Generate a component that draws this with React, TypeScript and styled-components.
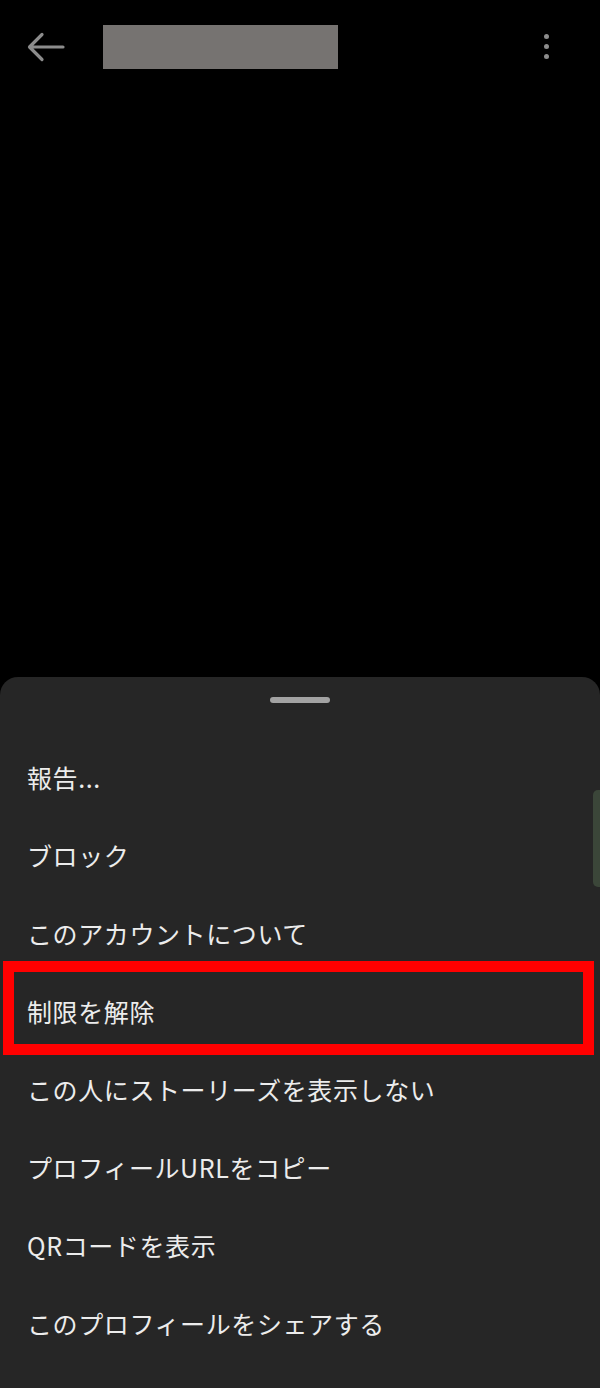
import React from "react";
import styled, { createGlobalStyle } from "styled-components";

const Global = createGlobalStyle`
  html, body { margin: 0; padding: 0; background: #000; }
  body { font-family: "Noto Sans CJK JP", "Noto Sans", sans-serif; }
  * { box-sizing: border-box; }
`;

const Screen = styled.div`
  width: 600px;
  height: 1388px;
  display: flex;
  flex-direction: column;
  background: #000;
  overflow: hidden;
  position: relative;
`;

const TopBar = styled.div`
  height: 96px;
  display: flex;
  align-items: flex-start;
  padding: 25px 0 0 0;
`;

const BackButton = styled.div`
  width: 103px;
  height: 44px;
  display: flex;
  align-items: center;
  padding-left: 27px;
  color: #8c8c8c;
`;

const TitleBlock = styled.div`
  width: 235px;
  height: 44px;
  background: #767371;
`;

const MenuButton = styled.div`
  margin-left: auto;
  margin-right: 51px;
  height: 44px;
  display: flex;
  flex-direction: column;
  justify-content: center;
  gap: 5px;
  padding-bottom: 2px;
`;

const Dot = styled.span`
  width: 5px;
  height: 5px;
  border-radius: 50%;
  background: #8c8c8c;
`;

const Sheet = styled.div`
  margin-top: auto;
  height: 711px;
  background: #262626;
  border-radius: 18px 18px 0 0;
  display: flex;
  flex-direction: column;
  position: relative;
`;

const HandleRow = styled.div`
  display: flex;
  justify-content: center;
  padding-top: 20px;
  height: 61px;
`;

const Handle = styled.div`
  width: 60px;
  height: 6px;
  border-radius: 3px;
  background: #a3a3a3;
`;

const Item = styled.div`
  position: relative;
  height: 78px;
  display: flex;
  align-items: center;
  padding-left: 27px;
  font-size: 25px;
  color: #ececec;
  letter-spacing: 0.6px;
`;

const Highlight = styled.div`
  position: absolute;
  left: 3px;
  right: 6px;
  top: -11px;
  bottom: -5px;
  border: 11px solid #ff0000;
  pointer-events: none;
`;

const ScrollThumb = styled.div`
  position: absolute;
  right: 0;
  top: 113px;
  width: 7px;
  height: 97px;
  border-radius: 5px 0 0 5px;
  background: #3b4639;
`;

const items = [
  "報告...",
  "ブロック",
  "このアカウントについて",
  "制限を解除",
  "この人にストーリーズを表示しない",
  "プロフィールURLをコピー",
  "QRコードを表示",
  "このプロフィールをシェアする",
];

export default function App() {
  return (
    <Screen>
      <Global />
      <TopBar>
        <BackButton>
          <svg width="38" height="30" viewBox="0 0 38 30" fill="none">
            <path
              d="M36 15H3M15 2.5L2.5 15L15 27.5"
              stroke="currentColor"
              strokeWidth="3.2"
              strokeLinecap="round"
              strokeLinejoin="round"
            />
          </svg>
        </BackButton>
        <TitleBlock />
        <MenuButton>
          <Dot />
          <Dot />
          <Dot />
        </MenuButton>
      </TopBar>
      <Sheet>
        <HandleRow>
          <Handle />
        </HandleRow>
        {items.map((t, i) => (
          <Item key={t}>
            {t}
            {i === 3 && <Highlight />}
          </Item>
        ))}
        <ScrollThumb />
      </Sheet>
    </Screen>
  );
}
